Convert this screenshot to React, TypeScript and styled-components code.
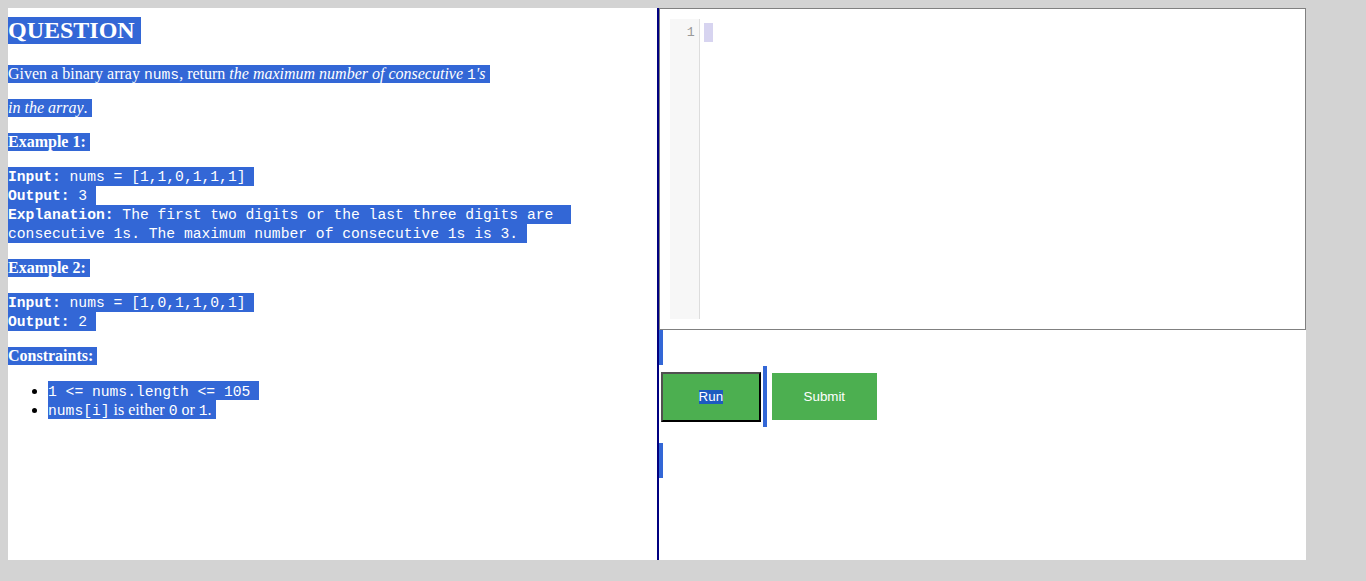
import React from "react";
import styled, { createGlobalStyle } from "styled-components";

const SEL = "#3367d6";

const Global = createGlobalStyle`
  html, body { margin: 0; padding: 0; }
  body {
    margin: 8px;
    background: #d3d3d3;
    font-family: "Liberation Serif", "Times New Roman", serif;
    font-size: 16px;
    color: #000;
  }
  * { box-sizing: content-box; }
`;

const Page = styled.div`
  display: flex;
  width: 95vw;
  height: 95vh;
  background: #fff;
`;

const LeftPanel = styled.section`
  width: 50%;
  flex-shrink: 0;
  border-right: 2px solid navy;
  padding-top: 9px;
  overflow: hidden;
`;

const RightPanel = styled.section`
  flex: 1;
  min-width: 0;
  display: flex;
  flex-direction: column;
`;

const Hl = styled.div<{ $tail?: number }>`
  width: fit-content;
  background: ${SEL};
  color: #fff;
  padding-right: ${(p) => p.$tail ?? 4}px;
  white-space: pre;
`;

const Title = styled(Hl)`
  font-size: 24px;
  font-weight: bold;
  line-height: 27px;
  margin: 0 0 21px;
`;

const Para = styled(Hl)`
  line-height: 18px;
  margin-bottom: 16px;
`;

const Heading = styled(Para)`
  font-weight: bold;
`;

const Code = styled.code`
  font-family: "Liberation Mono", "Courier New", monospace;
  font-size: 14.667px;
  line-height: 1;
`;

const Pre = styled.div`
  margin-bottom: 16px;
  font-family: "Liberation Mono", "Courier New", monospace;
  font-size: 14.667px;
`;

const PreLine = styled(Hl)`
  line-height: 17px;
  padding-top: 2px;
`;

const List = styled.ul`
  margin: 0;
  padding-left: 40px;
`;

const Item = styled.li`
  line-height: 19px;
`;

const ItemLine = styled(Hl)`
  line-height: 19px;
`;

const Editor = styled.div`
  border: 1px solid #808080;
  padding: 10px;
  height: 300px;
  display: flex;
`;

const Gutter = styled.div`
  width: 29px;
  background: #f7f7f7;
  border-right: 1px solid #ddd;
  padding-top: 4px;
  text-align: right;
`;

const LineNo = styled.div`
  font-family: "Liberation Mono", "DejaVu Sans Mono", monospace;
  font-size: 13.333px;
  line-height: 19px;
  color: #999;
  padding-right: 4px;
`;

const CodeArea = styled.div`
  flex: 1;
  padding: 4px 4px 0;
`;

const Cursor = styled.div`
  width: 9px;
  height: 19px;
  background: #d7d4f0;
`;

const SelBar = styled.div<{ $top?: number }>`
  width: 4px;
  height: 35px;
  background: ${SEL};
  margin-top: ${(p) => p.$top ?? 0}px;
`;

const ButtonRow = styled.div`
  display: flex;
  align-items: center;
  height: 61px;
  margin-top: 1px;
  padding-left: 2px;
`;

const Button = styled.button`
  font-family: "Liberation Sans", Arial, sans-serif;
  font-size: 13.333px;
  color: #fff;
  background: #4caf50;
  box-sizing: border-box;
  display: flex;
  align-items: center;
  justify-content: center;
  padding: 0;
  cursor: pointer;
`;

const RunButton = styled(Button)`
  width: 100px;
  height: 50px;
  border: 2px solid;
  border-color: #505050 #000 #000 #505050;
`;

const SubmitButton = styled(Button)`
  width: 105px;
  height: 47px;
  border: none;
  margin-left: 5px;
`;

const RunLabel = styled.span`
  background: #1d5bbf;
  line-height: 14px;
`;

const GapBar = styled.div`
  width: 4px;
  align-self: stretch;
  margin-left: 2px;
  background: ${SEL};
`;

export default function App() {
  return (
    <>
      <Global />
      <Page>
        <LeftPanel>
          <Title $tail={6}>QUESTION</Title>
          <Para>
            Given a binary array <Code>nums</Code>, return{" "}
            <em>the maximum number of consecutive </em>
            <Code>1</Code>
            <em>'s</em>
          </Para>
          <Para>
            <em>in the array</em>.
          </Para>
          <Heading>Example 1:</Heading>
          <Pre>
            <PreLine $tail={9}>
              <b>Input:</b> nums = [1,1,0,1,1,1]
            </PreLine>
            <PreLine $tail={9}>
              <b>Output:</b> 3
            </PreLine>
            <PreLine $tail={9}>
              <b>Explanation:</b> The first two digits or the last three digits are{" "}
            </PreLine>
            <PreLine $tail={9}>
              consecutive 1s. The maximum number of consecutive 1s is 3.
            </PreLine>
          </Pre>
          <Heading>Example 2:</Heading>
          <Pre>
            <PreLine $tail={9}>
              <b>Input:</b> nums = [1,0,1,1,0,1]
            </PreLine>
            <PreLine $tail={9}>
              <b>Output:</b> 2
            </PreLine>
          </Pre>
          <Heading>Constraints:</Heading>
          <List>
            <Item>
              <ItemLine $tail={9}>
                <Code>1 &lt;= nums.length &lt;= 105</Code>
              </ItemLine>
            </Item>
            <Item>
              <ItemLine>
                <Code>nums[i]</Code> is either <Code>0</Code> or <Code>1</Code>.
              </ItemLine>
            </Item>
          </List>
        </LeftPanel>
        <RightPanel>
          <Editor>
            <Gutter>
              <LineNo>1</LineNo>
            </Gutter>
            <CodeArea>
              <Cursor />
            </CodeArea>
          </Editor>
          <SelBar />
          <ButtonRow>
            <RunButton>
              <RunLabel>Run</RunLabel>
            </RunButton>
            <GapBar />
            <SubmitButton>Submit</SubmitButton>
          </ButtonRow>
          <SelBar $top={16} />
        </RightPanel>
      </Page>
    </>
  );
}
